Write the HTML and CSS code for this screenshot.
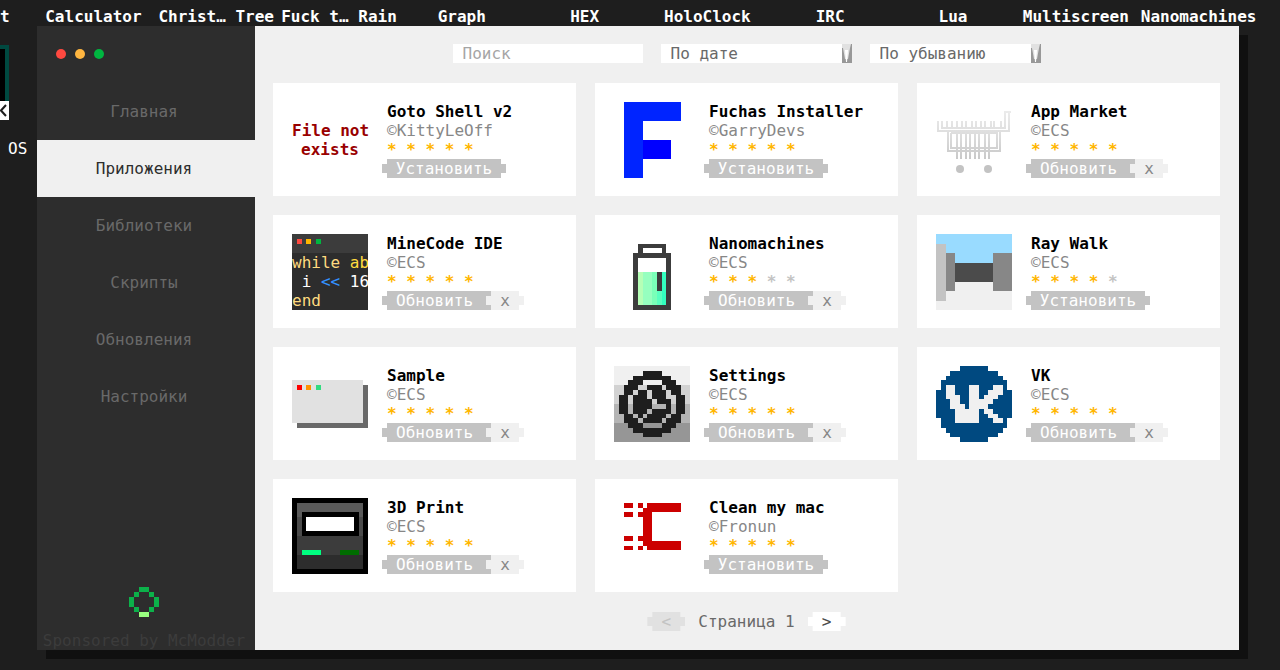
FILE: index.html
```html
<!DOCTYPE html>
<html lang="ru">
<head>
  <meta charset="UTF-8">
  <meta name="viewport" content="width=device-width, initial-scale=1.0">
  <title>App Market</title>
  <link rel="stylesheet" href="styles.css">
</head>
<body>
  <header class="desktop-labels">
    <span class="cut">t</span>
    <span>Calculator</span>
    <span>Christ… Tree</span>
    <span>Fuck t… Rain</span>
    <span>Graph</span>
    <span>HEX</span>
    <span>HoloClock</span>
    <span>IRC</span>
    <span>Lua</span>
    <span>Multiscreen</span>
    <span>Nanomachines</span>
  </header>

  <div class="desktop">
    <aside class="desktop-edge">
      <div class="desktop-icon"></div>
      <div class="desktop-shortcut">
        <svg width="8" height="19" viewBox="0 0 8 19"><path d="M6 4L1 9.500L6 15" fill="none" stroke="#1e1e1e" stroke-width="2"/></svg>
      </div>
      <span class="desktop-name">OS</span>
    </aside>

    <div class="window">
      <nav class="sidebar">
        <div class="window-buttons">
          <button class="dot red" aria-label="Закрыть"></button>
          <button class="dot yellow" aria-label="Свернуть"></button>
          <button class="dot green" aria-label="Развернуть"></button>
        </div>
        <a href="#">Главная</a>
        <a href="#" class="active">Приложения</a>
        <a href="#">Библиотеки</a>
        <a href="#">Скрипты</a>
        <a href="#">Обновления</a>
        <a href="#">Настройки</a>
        <div class="sponsor">
          <svg class="pixel" width="30" height="30" viewBox="0 0 6 6">
            <path fill="#0cb14a" d="M2 0h2v1h-2zM1 1h1v1h-1zM4 1h1v1h-1zM0 2h1v2h-1zM5 2h1v2h-1zM1 4h1v1h-1zM4 4h1v1h-1z"/>
            <path fill="#99ff80" d="M2 5h2v1h-2z"/>
          </svg>
          <p>Sponsored by McModder</p>
        </div>
      </nav>

      <main>
        <form class="toolbar">
          <input type="text" placeholder="Поиск" aria-label="Поиск">
          <div class="select">
            <select class="sort" aria-label="Сортировка"><option>По дате</option></select>
            <svg width="10" height="19" viewBox="0 0 10 19"><path fill="#989898" d="M0 0h10v19h-10z"/><path fill="#e1e1e1" d="M0 0h9l-1 4l-2 11h-3l-2-11h-1z"/><path fill="#fff" d="M3 6h3l-1 12h-1z"/></svg>
          </div>
          <div class="select">
            <select class="order" aria-label="Порядок"><option>По убыванию</option></select>
            <svg width="10" height="19" viewBox="0 0 10 19"><path fill="#989898" d="M0 0h10v19h-10z"/><path fill="#e1e1e1" d="M0 0h9l-1 4l-2 11h-3l-2-11h-1z"/><path fill="#fff" d="M3 6h3l-1 12h-1z"/></svg>
          </div>
        </form>

        <section class="apps">
          <article class="card">
            <div class="icon missing">File not<br>exists</div>
            <div class="info">
              <h2>Goto Shell v2</h2>
              <p class="author">©KittyLeOff</p>
              <p class="stars">* * * * *</p>
              <div class="actions"><button class="install">Установить</button></div>
            </div>
          </article>

          <article class="card">
            <svg class="icon pixel" viewBox="0 0 16 16">
              <path fill="#0024ff" d="M2 0h12v4h-8v12h-4z"/>
              <path fill="#0000ff" d="M6 8h6v4h-6z"/>
            </svg>
            <div class="info">
              <h2>Fuchas Installer</h2>
              <p class="author">©GarryDevs</p>
              <p class="stars">* * * * *</p>
              <div class="actions"><button class="install">Установить</button></div>
            </div>
          </article>

          <article class="card">
            <svg class="icon" viewBox="0 0 76 76">
              <defs>
                <linearGradient id="cart" gradientUnits="userSpaceOnUse" x1="0" y1="8" x2="0" y2="60">
                  <stop offset="0" stop-color="#ececec"/>
                  <stop offset="0.500" stop-color="#dcdcdc"/>
                  <stop offset="1" stop-color="#c6c6c6"/>
                </linearGradient>
              </defs>
              <g fill="none" stroke="url(#cart)" stroke-width="2">
                <path d="M75 10H69V26H6V19M73 11V29H2V19"/>
                <path d="M11 19v7M16 19v7M21 19v7M26 19v7M30 19v7M36 19v7M40 19v7M45 19v7M49 19v7M55 19v7M58 19v7M65 19v7"/>
                <path d="M12 29V49H64V29M15 31V46H61V31H15"/>
                <path d="M21 31v26M25 31v26M30 31v26M34 31v26M39 31v26M43 31v26M49 31v26M53 31v26"/>
              </g>
              <circle cx="24" cy="67" r="4" fill="#c3c3c3"/>
              <circle cx="52" cy="67" r="4" fill="#c3c3c3"/>
            </svg>
            <div class="info">
              <h2>App Market</h2>
              <p class="author">©ECS</p>
              <p class="stars">* * * * *</p>
              <div class="actions"><button class="update">Обновить</button><button class="remove">x</button></div>
            </div>
          </article>

          <article class="card">
            <div class="icon code">
              <svg class="pixel" width="76" height="19" viewBox="0 0 16 4">
                <path fill="#ff4940" d="M1 1h1v1h-1z"/>
                <path fill="#ffb600" d="M3 1h1v1h-1z"/>
                <path fill="#00b640" d="M5 1h1v1h-1z"/>
              </svg>
              <pre><span class="keyword">while</span> <span class="name">ab</span>
 i <span class="operator">&lt;&lt;</span> 16
<span class="keyword">end</span></pre>
            </div>
            <div class="info">
              <h2>MineCode IDE</h2>
              <p class="author">©ECS</p>
              <p class="stars">* * * * *</p>
              <div class="actions"><button class="update">Обновить</button><button class="remove">x</button></div>
            </div>
          </article>

          <article class="card">
            <svg class="icon pixel" viewBox="0 0 16 16">
              <path fill="#b6ffb6" d="M5 8h1v7h-1z"/>
              <path fill="#96ffbf" d="M6 8h2v7h-2z"/>
              <path fill="#7affb8" d="M8 8h1v7h-1z"/>
              <path fill="#5affbf" d="M9 8h1v7h-1z"/>
              <path fill="#33ffbf" d="M10 8h1v7h-1z"/>
              <path fill="#3c3c3c" d="M9 8h1v4h-1zM5 2h6v2h1v12h-8v-12h1zM6 3v1h4v-1zM5 5v10h6v-10z" fill-rule="evenodd"/>
            </svg>
            <div class="info">
              <h2>Nanomachines</h2>
              <p class="author">©ECS</p>
              <p class="stars">* * * <span class="off">* *</span></p>
              <div class="actions"><button class="update">Обновить</button><button class="remove">x</button></div>
            </div>
          </article>

          <article class="card">
            <svg class="icon pixel" viewBox="0 0 16 16">
              <path fill="#99dbff" d="M0 0h16v8h-16z"/>
              <path fill="#f0f0f0" d="M0 8h16v8h-16z"/>
              <path fill="#c3c3c3" d="M0 2h2v12h-2z"/>
              <path fill="#878787" d="M2 4h2v8h-2zM12 4h4v8h-4z"/>
              <path fill="#4b4b4b" d="M4 6h8v4h-8z"/>
            </svg>
            <div class="info">
              <h2>Ray Walk</h2>
              <p class="author">©ECS</p>
              <p class="stars">* * * * <span class="off">*</span></p>
              <div class="actions"><button class="install">Установить</button></div>
            </div>
          </article>

          <article class="card">
            <svg class="icon pixel" viewBox="0 0 16 16">
              <path fill="#696969" d="M1 4h15v9h-15z"/>
              <path fill="#e1e1e1" d="M0 3h15v9h-15z"/>
              <path fill="#ff0000" d="M1 4h1v1h-1z"/>
              <path fill="#ff9200" d="M3 4h1v1h-1z"/>
              <path fill="#33db80" d="M5 4h1v1h-1z"/>
            </svg>
            <div class="info">
              <h2>Sample</h2>
              <p class="author">©ECS</p>
              <p class="stars">* * * * *</p>
              <div class="actions"><button class="update">Обновить</button><button class="remove">x</button></div>
            </div>
          </article>

          <article class="card">
            <svg class="icon pixel" viewBox="0 0 16 16">
              <path fill="#f0f0f0" d="M0 0h16v4h-16z"/>
              <path fill="#d2d2d2" d="M0 4h16v4h-16z"/>
              <path fill="#b4b4b4" d="M0 8h16v4h-16z"/>
              <path fill="#969696" d="M0 12h16v4h-16z"/>
              <path stroke="#1e1e1e" d="M6 1.500h4M4 2.500h8M3 3.500h3M10 3.500h3M2 4.500h3M7 4.500h3M11 4.500h3M2 5.500h2M5 5.500h2M8 5.500h3M12 5.500h2M1 6.500h2M4 6.500h3M8 6.500h3M13 6.500h2M1 7.500h2M4 7.500h4M9 7.500h3M13 7.500h2M1 8.500h2M4 8.500h4M11 8.500h1M13 8.500h2M1 9.500h2M4 9.500h3M8 9.500h4M13 9.500h2M2 10.500h2M5 10.500h1M7 10.500h4M12 10.500h2M2 11.500h3M6 11.500h4M11 11.500h3M3 12.500h3M10 12.500h3M4 13.500h8M6 14.500h4"/>
            </svg>
            <div class="info">
              <h2>Settings</h2>
              <p class="author">©ECS</p>
              <p class="stars">* * * * *</p>
              <div class="actions"><button class="update">Обновить</button><button class="remove">x</button></div>
            </div>
          </article>

          <article class="card">
            <svg class="icon pixel" viewBox="0 0 16 16">
              <path fill="#004980" d="M5 0h6v1h2v1h1v1h1v2h1v6h-1v2h-1v1h-1v1h-2v1h-6v-1h-2v-1h-1v-1h-1v-2h-1v-6h1v-2h1v-1h1v-1h2z"/>
              <path stroke="#f0f0f0" d="M2 4.500h2M7 4.500h2M12 4.500h2M2 5.500h2M7 5.500h2M11 5.500h3M2 6.500h3M7 6.500h2M10 6.500h3M3 7.500h2M7 7.500h5M3 8.500h3M7 8.500h4M4 9.500h5M10 9.500h2M4 10.500h5M11 10.500h2M4 11.500h5M12 11.500h2"/>
            </svg>
            <div class="info">
              <h2>VK</h2>
              <p class="author">©ECS</p>
              <p class="stars">* * * * *</p>
              <div class="actions"><button class="update">Обновить</button><button class="remove">x</button></div>
            </div>
          </article>

          <article class="card">
            <svg class="icon pixel" viewBox="0 0 16 16">
              <path d="M0 0h16v16h-16z"/>
              <path fill="#5a5a5a" d="M1 1h14v3h-14z"/>
              <path fill="#4b4b4b" d="M1 4h14v4h-14z"/>
              <path fill="#3c3c3c" d="M1 8h14v4h-14z"/>
              <path fill="#2d2d2d" d="M1 12h14v3h-14z"/>
              <path d="M2 3h12v5h-12z"/>
              <path fill="#fff" d="M3 4h10v3h-10z"/>
              <path fill="#00ff80" d="M2 11h4v1h-4z"/>
              <path fill="#006d00" d="M10 11h4v1h-4z"/>
            </svg>
            <div class="info">
              <h2>3D Print</h2>
              <p class="author">©ECS</p>
              <p class="stars">* * * * *</p>
              <div class="actions"><button class="update">Обновить</button><button class="remove">x</button></div>
            </div>
          </article>

          <article class="card">
            <svg class="icon pixel" viewBox="0 0 16 16">
              <path fill="#cc0000" d="M2 1h2v1h-2zM2 3h2v1h-2zM2 8h2v1h-2zM2 10h2v1h-2zM5 1h1v1h-1zM5 3h1v1h-1zM5 8h1v1h-1zM5 10h1v1h-1zM7 1h7v2h-6v6h6v2h-7v-1h-1v-8h1z"/>
            </svg>
            <div class="info">
              <h2>Clean my mac</h2>
              <p class="author">©Fronun</p>
              <p class="stars">* * * * *</p>
              <div class="actions"><button class="install">Установить</button></div>
            </div>
          </article>
        </section>

        <div class="pagination">
          <button class="prev" disabled>&lt;</button>
          <span>Страница 1</span>
          <button class="next">&gt;</button>
        </div>
      </main>
    </div>
  </div>
</body>
</html>
```

FILE: styles.css
```css
* {
  box-sizing: border-box;
}
body {
  margin: 0;
  background: #1e1e1e;
  font-family: "DejaVu Sans Mono", monospace;
  font-size: 16px;
  line-height: 19px;
}
h2,
p,
pre {
  margin: 0;
  font: inherit;
}
button,
input,
select {
  height: 19px;
  padding: 0;
  border: 0;
  border-radius: 0;
  font: inherit;
}
button {
  cursor: pointer;
}
svg {
  display: block;
}
.pixel {
  shape-rendering: crispEdges;
}

/* desktop */
.desktop-labels {
  display: grid;
  grid-template-columns: 32px repeat(10, 1fr) 20px;
  height: 26px;
  padding-top: 7px;
  color: #fff;
  font-weight: bold;
  text-align: center;
  white-space: nowrap;
}
.desktop-labels .cut {
  text-align: left;
}
.desktop {
  display: flex;
  padding-bottom: 20px;
}
.desktop-edge {
  width: 37px;
  padding-top: 19px;
}
.desktop-icon {
  width: 9px;
  height: 56px;
  background: #000;
  border: 4px solid #004940;
  border-width: 4px 4px 0 0;
}
.desktop-shortcut {
  width: 9px;
  height: 19px;
  background: #fff;
}
.desktop-name {
  display: block;
  padding-top: 19px;
  padding-left: 8px;
  color: #fff;
}

/* window */
.window {
  display: flex;
  flex: 1;
  margin-right: 41px;
  background: #f0f0f0;
  box-shadow: 9px 9px 0 #101010;
}
.sidebar {
  display: flex;
  flex-direction: column;
  flex-shrink: 0;
  width: 218px;
  background: #2d2d2d;
}
.window-buttons {
  display: flex;
  gap: 9px;
  height: 57px;
  padding: 23px 19px 0;
}
.dot {
  width: 10px;
  height: 10px;
  border-radius: 50%;
}
.red {
  background: #ff4940;
}
.yellow {
  background: #ffb640;
}
.green {
  background: #00b640;
}
.sidebar a {
  padding: 19px 4px 19px 0;
  color: #696969;
  text-align: center;
  text-decoration: none;
}
.sidebar .active {
  background: #f0f0f0;
  color: #2d2d2d;
}
.sponsor {
  display: flex;
  flex-direction: column;
  align-items: center;
  gap: 14px;
  margin-top: auto;
  padding-right: 4px;
  color: #3c3c3c;
  white-space: nowrap;
}

main {
  flex: 1;
  padding: 18px 19px 19px 18px;
}
.toolbar {
  display: flex;
  justify-content: center;
  gap: 18px;
  margin-bottom: 20px;
}
.toolbar input,
.toolbar select {
  padding: 0 10px;
  background: #fff;
  color: #696969;
}
.toolbar input {
  width: 190px;
}
.toolbar input::placeholder {
  color: #a5a5a5;
}
.toolbar select {
  appearance: none;
}
.sort {
  width: 191px;
}
.order {
  width: 171px;
}
.select {
  position: relative;
}
.select svg {
  position: absolute;
  top: 0;
  right: 0;
  pointer-events: none;
}

/* cards */
.apps {
  display: grid;
  grid-template-columns: repeat(3, 1fr);
  gap: 19px;
}
.card {
  display: flex;
  gap: 19px;
  padding: 19px 19px 18px;
  background: #fff;
}
.icon {
  flex-shrink: 0;
  width: 76px;
  height: 76px;
}
.missing {
  padding-top: 19px;
  color: #990000;
  font-weight: bold;
  text-align: center;
  white-space: nowrap;
}
.code {
  overflow: hidden;
  background: #2d2d2d;
  color: #fff;
}
.code svg {
  background: #3c3c3c;
}
.keyword {
  color: #ffdb80;
}
.name {
  color: #ffdb40;
}
.operator {
  color: #3392ff;
}
.info {
  color: #000;
  white-space: nowrap;
}
.info h2 {
  font-weight: bold;
}
.author {
  color: #878787;
}
.stars {
  color: #ffb600;
  font-weight: bold;
}
.off {
  color: #c3c3c3;
}
.actions {
  display: flex;
  margin-left: -5px;
}

/* buttons with a notch on each side */
.install,
.remove,
.prev,
.next {
  clip-path: polygon(5px 0, calc(100% - 5px) 0, calc(100% - 5px) 5px, 100% 5px, 100% 14px, calc(100% - 5px) 14px, calc(100% - 5px) 100%, 5px 100%, 5px 14px, 0 14px, 0 5px, 5px 5px);
}
.install {
  width: 124px;
  background: #c3c3c3;
  color: #fff;
}
.update {
  width: 110px;
  padding-left: 14px;
  background: #c3c3c3;
  color: #fff;
  text-align: left;
  clip-path: polygon(5px 0, 100% 0, 100% 100%, 5px 100%, 5px 14px, 0 14px, 0 5px, 5px 5px);
}
.remove {
  width: 38px;
  margin-left: -6px;
  background: #f0f0f0;
  color: #878787;
}
.pagination {
  display: flex;
  justify-content: center;
  gap: 13px;
  margin-top: 20px;
  color: #696969;
}
.prev,
.next {
  width: 38px;
}
.prev {
  background: #e1e1e1;
  color: #c3c3c3;
}
.next {
  background: #fff;
  color: #4b4b4b;
}
```
